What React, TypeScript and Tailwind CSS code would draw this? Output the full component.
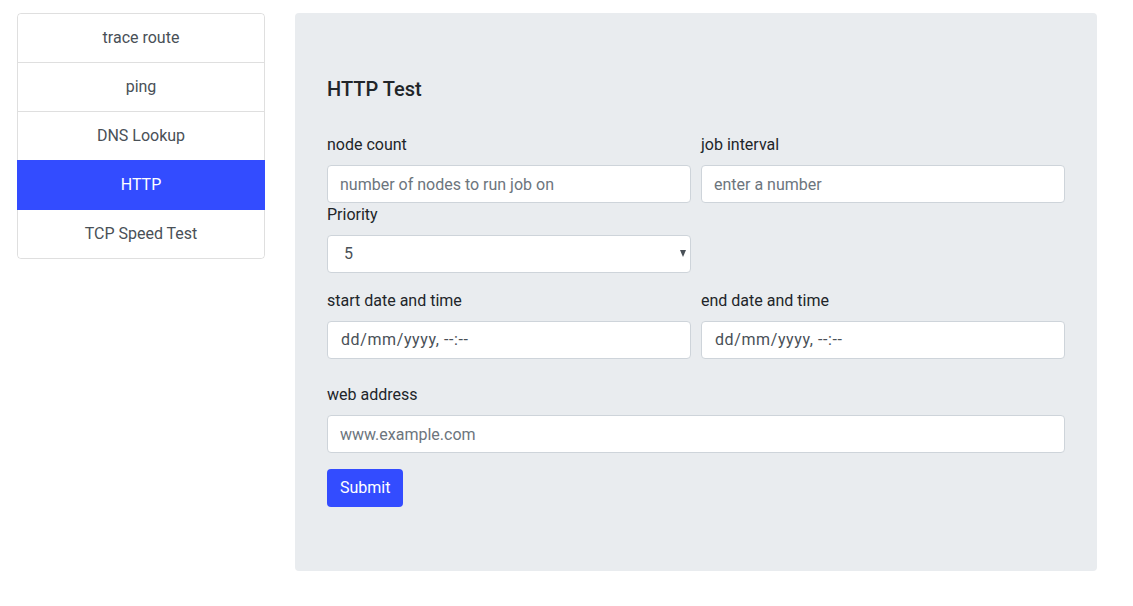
import { ChevronDown } from "lucide-react"

const tabs = ["trace route", "ping", "DNS Lookup", "HTTP", "TCP Speed Test"]

const Label = ({ children }: { children: React.ReactNode }) => (
  <label className="block text-[16px] leading-6 text-[#212529] mb-2">{children}</label>
)

const inputCls =
  "block w-full h-[38px] px-3 rounded border border-[#ced4da] bg-white text-[16px] text-[#495057] placeholder:text-[#6c757d] outline-none"

const DateBox = () => (
  <div className="flex items-center w-full h-[38px] pl-[13px] rounded border border-[#ced4da] bg-white text-[16px] text-[#495057] tracking-[0.6px]">
    dd/mm/yyyy, --:--
  </div>
)

export default function App() {
  return (
    <div className="min-h-screen bg-white font-['Roboto',sans-serif] pt-[13px] pl-[17px] flex items-start gap-[30px]">
      <div className="w-[248px] rounded border border-black/[0.125]">
        {tabs.map((t, i) => {
          const active = t === "HTTP"
          let cls = "h-[48px] flex items-center justify-center text-[16px] box-content "
          if (active) cls += "bg-[#334cff] text-white border-y border-[#334cff] -mx-px"
          else cls += "bg-white text-[#495057]"
          if (i === 0) cls += " rounded-t"
          if (i === tabs.length - 1) cls += " rounded-b"
          if (!active && i > 0 && tabs[i - 1] !== "HTTP") cls += " border-t border-black/[0.125]"
          return (
            <div key={t} className={cls}>
              {t}
            </div>
          )
        })}
      </div>

      <div className="w-[802px] rounded bg-[#e9ecef] px-8 pt-16 pb-16">
        <h5 className="text-[20px] leading-6 font-medium text-[#212529] mb-[32px]">HTTP Test</h5>

        <div className="grid grid-cols-2 gap-x-[10px]">
          <div>
            <Label>node count</Label>
            <input className={inputCls} placeholder="number of nodes to run job on" />
          </div>
          <div>
            <Label>job interval</Label>
            <input className={inputCls} placeholder="enter a number" />
          </div>
        </div>

        <div className="grid grid-cols-2 gap-x-[10px] mb-4">
          <div>
            <Label>Priority</Label>
            <div className="relative">
              <div className={inputCls + " flex items-center pl-4"}>5</div>
              <ChevronDown className="hidden" />
              <div className="absolute right-[5px] top-[15px] w-0 h-0 border-l-[3.5px] border-r-[3.5px] border-t-[7px] border-l-transparent border-r-transparent border-t-[#495057]" />
            </div>
          </div>
        </div>

        <div className="grid grid-cols-2 gap-x-[10px] mb-[24px]">
          <div>
            <Label>start date and time</Label>
            <DateBox />
          </div>
          <div>
            <Label>end date and time</Label>
            <DateBox />
          </div>
        </div>

        <div className="mb-4">
          <Label>web address</Label>
          <input className={inputCls} placeholder="www.example.com" />
        </div>

        <button className="h-[38px] px-[13px] rounded bg-[#334cff] text-white text-[16px]">Submit</button>
      </div>
    </div>
  )
}
